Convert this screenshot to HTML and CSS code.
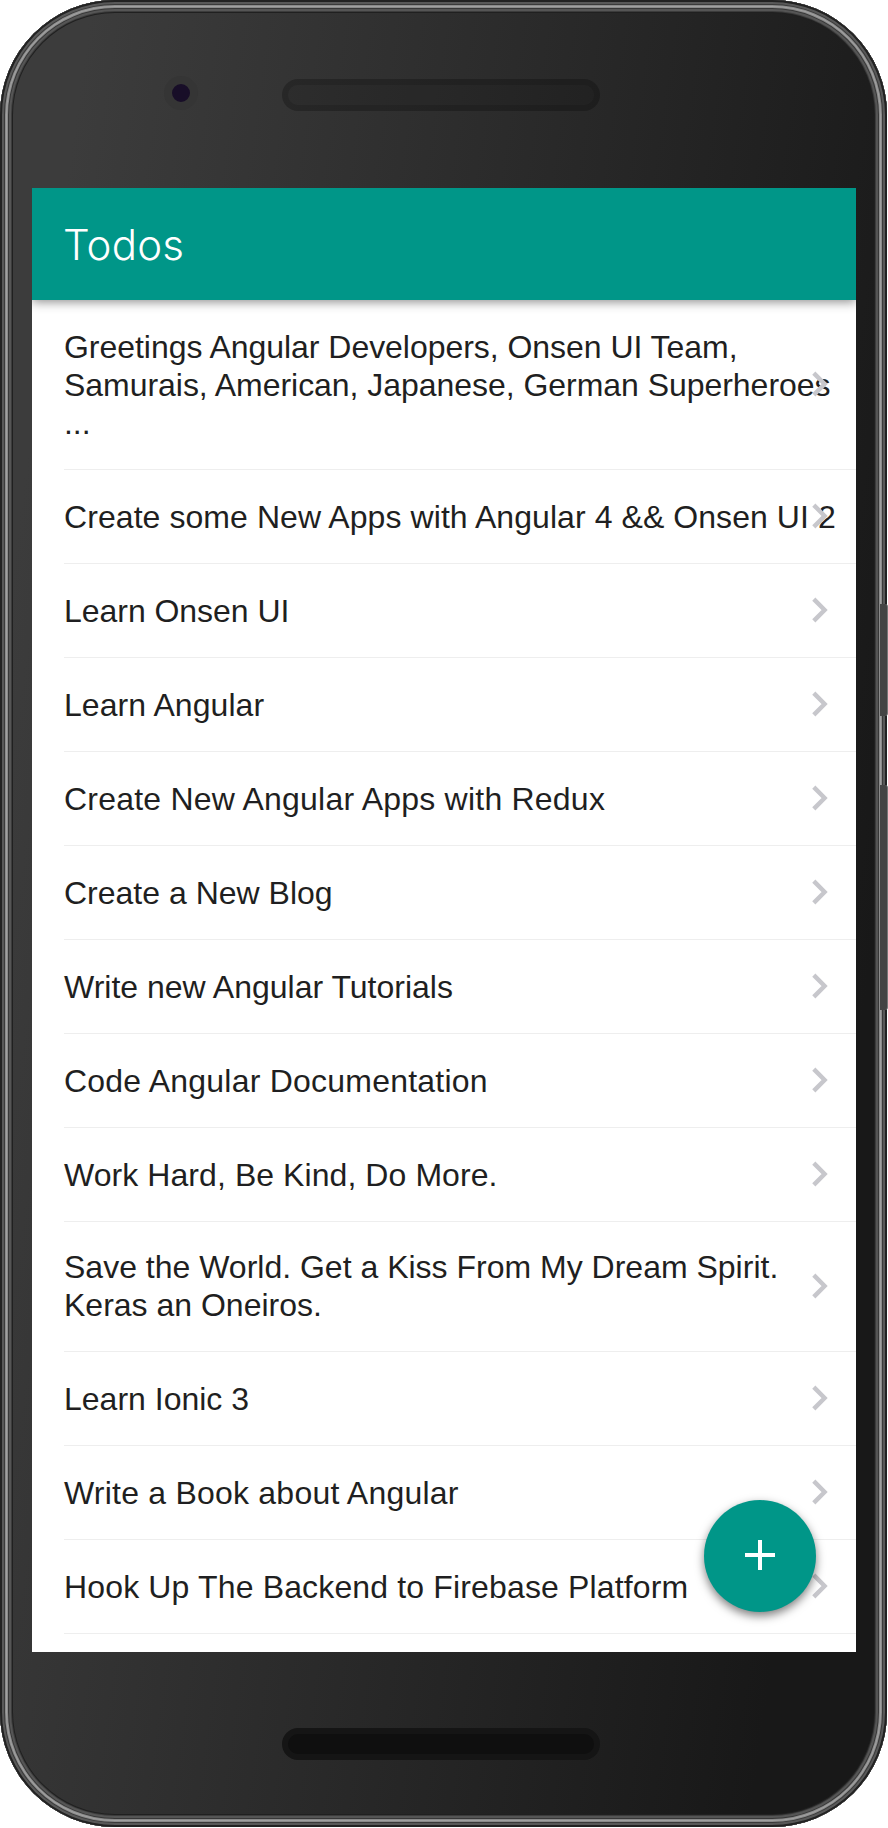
FILE: index.html
```html
<!DOCTYPE html>
<html lang="en"><head><meta charset="utf-8"><title>Todos</title><link rel="stylesheet" href="styles.css"></head>
<body>
<svg width="0" height="0" class="defs"><symbol id="chevron" viewBox="0 0 16 26"><path d="M1.8 2.1 12.6 13 1.8 23.9" fill="none" stroke="#c7c7cc" stroke-width="4.4"/></symbol></svg>
<div class="phone">
  <i class="key power"></i><i class="key volume"></i>
  <div class="top"><i class="camera"></i><i class="speaker"></i></div>
  <main class="screen">
    <header class="toolbar"><h1>Todos</h1></header>
    <ul class="list">
      <li class="snug"><span>Greetings Angular Developers, Onsen UI Team,<br>Samurais, American, Japanese, German Superheroes<br>...</span><svg><use href="#chevron"/></svg></li>
      <li class="loose"><span>Create some New Apps with Angular 4 &amp;&amp; Onsen UI 2</span><svg><use href="#chevron"/></svg></li>
      <li class="snug"><span>Learn Onsen UI</span><svg><use href="#chevron"/></svg></li>
      <li class="loose"><span>Learn Angular</span><svg><use href="#chevron"/></svg></li>
      <li class="wide"><span>Create New Angular Apps with Redux</span><svg><use href="#chevron"/></svg></li>
      <li><span>Create a New Blog</span><svg><use href="#chevron"/></svg></li>
      <li><span>Write new Angular Tutorials</span><svg><use href="#chevron"/></svg></li>
      <li class="wide"><span>Code Angular Documentation</span><svg><use href="#chevron"/></svg></li>
      <li class="loose"><span>Work Hard, Be Kind, Do More.</span><svg><use href="#chevron"/></svg></li>
      <li class="double"><span>Save the World. Get a Kiss From My Dream Spirit.<br>Keras an Oneiros.</span><svg><use href="#chevron"/></svg></li>
      <li><span>Learn Ionic 3</span><svg><use href="#chevron"/></svg></li>
      <li class="wide"><span>Write a Book about Angular</span><svg><use href="#chevron"/></svg></li>
      <li class="medium"><span>Hook Up The Backend to Firebase Platform</span><svg><use href="#chevron"/></svg></li>
    </ul>
    <button class="fab" aria-label="Add"></button>
  </main>
  <div class="bottom"><i class="speaker"></i></div>
</div>
</body></html>
```
FILE: styles.css
```css
*{box-sizing:border-box}
body{margin:0;background:#fff;font-family:"Liberation Sans",Arial,sans-serif}
.defs{position:absolute}
.phone{position:relative;width:887px;height:1827px;border-radius:115px;padding:0 31px 0 32px;background:linear-gradient(98deg,#3c3c3c 8%,#181818 88%);
 box-shadow:inset 0 0 0 2px #222,inset 0 0 0 4px #585858,inset 0 0 0 5px #3a3a3a,inset 0 0 0 6px #8a8a8a,inset 0 0 0 7px #a0a0a0,inset 0 0 0 8px #8a8a8a,inset 0 0 0 9px #383838,inset 0 0 0 11px #555,inset 0 0 0 12px #3c3c3c,inset 0 0 0 13px #202020}
.key{position:absolute;left:880px;width:8px;background:#444;border-right:1px solid #777;border-radius:0 3px 3px 0}
.power{top:604px;height:112px}
.volume{top:785px;height:225px}
.top{height:188px;position:relative}
.camera{position:absolute;left:132px;top:76px;width:34px;height:34px;border-radius:50%;border:8px solid #353535;background:#180e28}
.speaker{display:block;width:318px;height:32px;border-radius:16px;border:6px solid rgba(0,0,0,.25);background:rgba(0,0,0,.13);background-clip:padding-box}
.top .speaker{position:absolute;left:250px;top:79px}
.bottom{padding:76px 0 0 250px}
.bottom .speaker{border-color:#151515;background:#0f0f0f}
.screen{position:relative;width:824px;height:1464px;background:#fff;overflow:hidden}
.toolbar{position:relative;height:112px;padding:2px 0 0 31px;background:#009688;display:flex;align-items:center;box-shadow:0 2px 10px rgba(0,0,0,.45)}
h1{margin:0;color:#fff;font:300 42px/56px Inter,sans-serif;letter-spacing:.2px}
.list{list-style:none;margin:0;padding:0 0 0 32px}
li{position:relative;min-height:94px;padding:27px 0 26px;border-bottom:1px solid #eee;display:flex;align-items:center;color:#1f1f21;font-size:32px;line-height:38px;white-space:nowrap}
li:first-child{padding:28px 0 27px}
li.double{padding:26px 0 27px}
.snug{letter-spacing:-.04px}
.loose{letter-spacing:.07px}
.medium{letter-spacing:.15px}
.wide{letter-spacing:.22px}
li svg{position:absolute;right:28px;top:50%;width:16px;height:26px;margin-top:-14px}
.fab{position:absolute;left:672px;top:1312px;width:112px;height:112px;border:0;border-radius:50%;background:linear-gradient(#fff,#fff) center/30px 4px no-repeat,linear-gradient(#fff,#fff) center/4px 30px no-repeat,#009688;background-position:center 53px,center 40px,0 0;box-shadow:0 4px 10px rgba(0,0,0,.5)}
```
